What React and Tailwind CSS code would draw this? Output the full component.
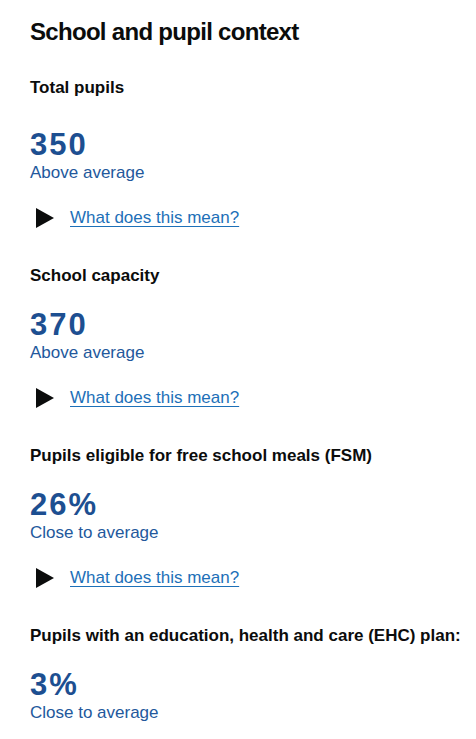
import React from "react";

const sections = [
  { title: "Total pupils", value: "350", desc: "Above average", link: true },
  { title: "School capacity", value: "370", desc: "Above average", link: true },
  { title: "Pupils eligible for free school meals (FSM)", value: "26%", desc: "Close to average", link: true },
  { title: "Pupils with an education, health and care (EHC) plan:", value: "3%", desc: "Close to average", link: false },
];

function Section({ s, first }) {
  return (
    <div className={first ? "mt-[31px]" : "mt-[38px]"}>
      <h3 className="text-[17px] leading-[20px] font-bold text-[#0b0c0c]">{s.title}</h3>
      <div className={first ? "mt-[30px]" : "mt-[22px]"}>
        <div className="text-[31px] leading-[34px] font-bold tracking-[2px] text-[#1d4f91]">{s.value}</div>
        <div className="mt-[1px] text-[17px] leading-[20px] text-[#23589c]">{s.desc}</div>
      </div>
      {s.link && (
        <div className="mt-[25px] flex items-center">
          <svg width="18" height="20" viewBox="0 0 18 20" className="ml-[6px]">
            <polygon points="0,0 18,10 0,20" fill="#0b0c0c" />
          </svg>
          <a href="#" className="ml-[16px] text-[17px] leading-[20px] text-[#1d70b8] underline underline-offset-[3px] decoration-1">
            What does this mean?
          </a>
        </div>
      )}
    </div>
  );
}

export default function App() {
  return (
    <div className="min-h-[739px] bg-white pl-[30px] pt-[17px] font-['Liberation_Sans',Arial,sans-serif]">
      <h2 className="text-[24px] leading-[30px] font-bold tracking-[-0.7px] text-[#0b0c0c]">School and pupil context</h2>
      {sections.map((s, i) => (
        <Section key={i} s={s} first={i === 0} />
      ))}
    </div>
  );
}
